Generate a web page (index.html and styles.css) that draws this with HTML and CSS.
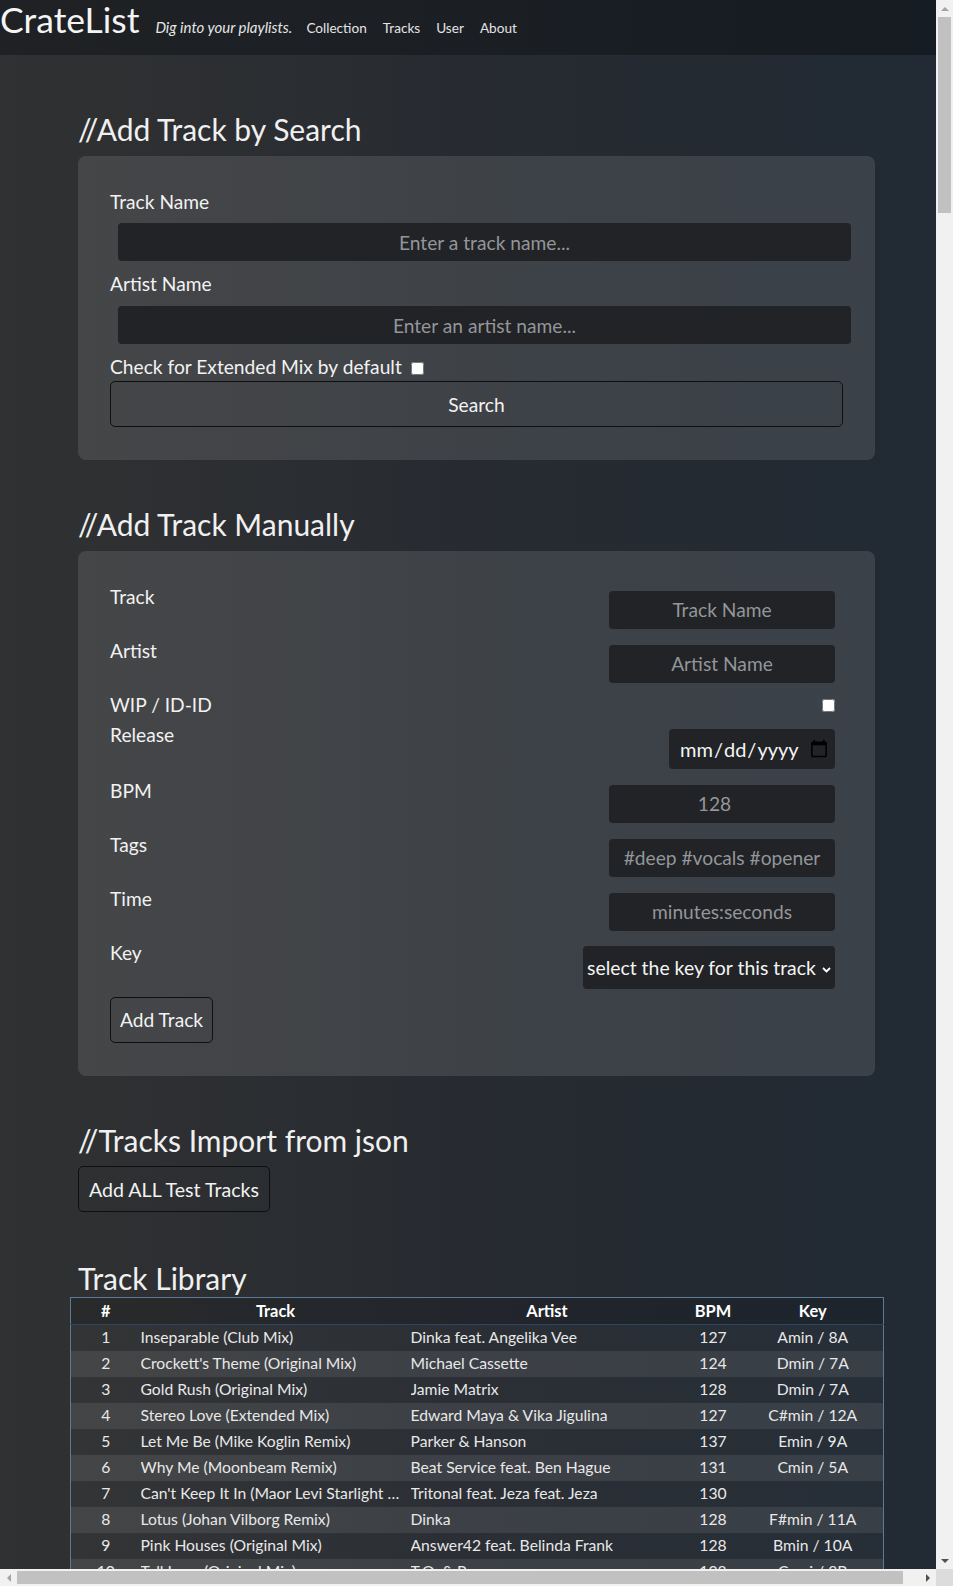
FILE: index.html
```html
<!DOCTYPE html>
<html lang="en">
<head>
<meta charset="utf-8">
<title>CrateList</title>
<link rel="stylesheet" href="styles.css">
</head>
<body>
<header class="topbar">
  <a class="brand" href="#">CrateList</a>
  <span class="tagline">Dig into your playlists.</span>
  <nav class="nav">
    <a href="#">Collection</a>
    <a href="#">Tracks</a>
    <a href="#">User</a>
    <a href="#">About</a>
  </nav>
</header>

<main class="page">
  <section class="section">
    <h2 class="heading">//Add Track by Search</h2>
    <form class="card search-card">
      <label class="field-label">Track Name</label>
      <input class="wide-input" type="text" placeholder="Enter a track name...">
      <label class="field-label">Artist Name</label>
      <input class="wide-input" type="text" placeholder="Enter an artist name...">
      <label class="field-label check-line">Check for Extended Mix by default <input type="checkbox" class="check"></label>
      <button type="button" class="btn btn-block">Search</button>
    </form>
  </section>

  <section class="section">
    <h2 class="heading">//Add Track Manually</h2>
    <form class="card manual-card">
      <div class="row">
        <label class="field-label">Track</label>
        <input class="small-input" type="text" placeholder="Track Name">
      </div>
      <div class="row">
        <label class="field-label">Artist</label>
        <input class="small-input" type="text" placeholder="Artist Name">
      </div>
      <div class="row">
        <label class="field-label">WIP / ID-ID</label>
        <input class="row-check" type="checkbox">
      </div>
      <div class="row">
        <label class="field-label">Release</label>
        <input class="date-input" type="date">
      </div>
      <div class="row">
        <label class="field-label">BPM</label>
        <input class="small-input" type="number" placeholder="128">
      </div>
      <div class="row">
        <label class="field-label">Tags</label>
        <input class="small-input" type="text" placeholder="#deep #vocals #opener">
      </div>
      <div class="row">
        <label class="field-label">Time</label>
        <input class="small-input" type="text" placeholder="minutes:seconds">
      </div>
      <div class="row">
        <label class="field-label">Key</label>
        <div class="select-wrap">
          <select class="key-select">
            <option>select the key for this track</option>
          </select>
          <svg class="chevron" width="9" height="6" viewBox="0 0 9 6"><polyline points="1,1 4.5,4.5 8,1" fill="none" stroke="#fff" stroke-width="1.8"/></svg>
        </div>
      </div>
      <button type="button" class="btn btn-add">Add Track</button>
    </form>
  </section>

  <section class="section">
    <h2 class="heading import-heading">//Tracks Import from json</h2>
    <button type="button" class="btn btn-add btn-import">Add ALL Test Tracks</button>
  </section>

  <section class="section library">
    <h2 class="heading library-heading">Track Library</h2>
    <table class="tracks">
      <colgroup>
        <col class="c-num"><col class="c-track"><col class="c-artist"><col class="c-bpm"><col class="c-key">
      </colgroup>
      <thead>
        <tr><th>#</th><th>Track</th><th>Artist</th><th>BPM</th><th>Key</th></tr>
      </thead>
      <tbody>
        <tr><td class="num">1</td><td class="name">Inseparable (Club Mix)</td><td class="name">Dinka feat. Angelika Vee</td><td class="num">127</td><td class="num">Amin / 8A</td></tr>
        <tr><td class="num">2</td><td class="name">Crockett's Theme (Original Mix)</td><td class="name">Michael Cassette</td><td class="num">124</td><td class="num">Dmin / 7A</td></tr>
        <tr><td class="num">3</td><td class="name">Gold Rush (Original Mix)</td><td class="name">Jamie Matrix</td><td class="num">128</td><td class="num">Dmin / 7A</td></tr>
        <tr><td class="num">4</td><td class="name">Stereo Love (Extended Mix)</td><td class="name">Edward Maya &amp; Vika Jigulina</td><td class="num">127</td><td class="num">C#min / 12A</td></tr>
        <tr><td class="num">5</td><td class="name">Let Me Be (Mike Koglin Remix)</td><td class="name">Parker &amp; Hanson</td><td class="num">137</td><td class="num">Emin / 9A</td></tr>
        <tr><td class="num">6</td><td class="name">Why Me (Moonbeam Remix)</td><td class="name">Beat Service feat. Ben Hague</td><td class="num">131</td><td class="num">Cmin / 5A</td></tr>
        <tr><td class="num">7</td><td class="name">Can't Keep It In (Maor Levi Starlight Remix)</td><td class="name">Tritonal feat. Jeza feat. Jeza</td><td class="num">130</td><td class="num"></td></tr>
        <tr><td class="num">8</td><td class="name">Lotus (Johan Vilborg Remix)</td><td class="name">Dinka</td><td class="num">128</td><td class="num">F#min / 11A</td></tr>
        <tr><td class="num">9</td><td class="name">Pink Houses (Original Mix)</td><td class="name">Answer42 feat. Belinda Frank</td><td class="num">128</td><td class="num">Bmin / 10A</td></tr>
        <tr><td class="num">10</td><td class="name">Tell Love (Original Mix)</td><td class="name">T.O. &amp; P.</td><td class="num">128</td><td class="num">Cmaj / 8B</td></tr>
      </tbody>
    </table>
  </section>
</main>

<div class="scrollbar scrollbar-v" aria-hidden="true">
  <span class="sb-btn"><span class="tri tri-up"></span></span>
  <span class="sb-track"><span class="sb-thumb"></span></span>
  <span class="sb-btn"><span class="tri tri-down"></span></span>
</div>
<div class="scrollbar scrollbar-h" aria-hidden="true">
  <span class="sb-btn"><span class="tri tri-left"></span></span>
  <span class="sb-track"><span class="sb-thumb"></span></span>
  <span class="sb-btn"><span class="tri tri-right"></span></span>
</div>
<div class="scroll-corner" aria-hidden="true"></div>
</body>
</html>
```

FILE: styles.css
```css
html, body {
  margin: 0;
  padding: 0;
}

body {
  font-family: Lato, "Open Sans", sans-serif;
  color: #eeeeee;
  background: linear-gradient(90deg, #303132 0%, #272b31 50%, #212a34 100%);
  line-height: 1.5;
}

/* ---------- top bar ---------- */
.topbar {
  width: 100vw;
  height: 55px;
  box-sizing: border-box;
  display: flex;
  align-items: baseline;
  gap: 16px;
  background: linear-gradient(90deg, #1f2124 0%, #1b1f24 50%, #151b22 100%);
}

.brand {
  font-size: 35.5px;
  line-height: 40px;
  color: #f4f4f4;
  text-decoration: none;
  font-weight: 400;
}

.tagline {
  font-size: 15px;
  font-style: italic;
  color: #e6e6e6;
}

.nav {
  display: flex;
  gap: 16px;
  margin-left: -2px;
}

.nav a {
  font-size: 13.6px;
  color: #e4e4e4;
  text-decoration: none;
}

/* ---------- page ---------- */
.page {
  width: 100vw;
  box-sizing: border-box;
  padding: 58px 78px 40px;
}

.section + .section {
  margin-top: 48px;
}

.heading {
  margin: 0 0 9px;
  font-size: 30px;
  font-weight: 400;
  line-height: 33.6px;
  color: #f0f0f0;
}

.import-heading {
  margin-bottom: 9px;
}

.section.library {
  margin-top: 50px;
}

.library-heading {
  margin: 0 0 1px 8px;
}

.card {
  background: rgba(255, 255, 255, 0.11);
  border-radius: 8px;
  padding: 32px 32px 33px;
}

.field-label {
  display: block;
  font-size: 19.2px;
  line-height: 28.8px;
  color: #f2f2f2;
}

input, select, button {
  font-family: inherit;
}

.wide-input {
  display: block;
  box-sizing: border-box;
  width: 100%;
  height: 38px;
  margin: 7px 0 9px 8px;
  border: none;
  border-radius: 4px;
  background: #212326;
  color: #f0f0f0;
  font-size: 19.2px;
  text-align: center;
}

::placeholder {
  color: #93969a;
  opacity: 1;
}

.check-line {
  line-height: 27px;
}

.check {
  width: 13px;
  height: 13px;
  margin: 0 0 0 4px;
  vertical-align: -1px;
}

.btn {
  box-sizing: border-box;
  background: transparent;
  border: 1px solid #0e0f10;
  border-radius: 5px;
  color: #f2f2f2;
  font-size: 19.2px;
  height: 46px;
  cursor: pointer;
}

.btn-block {
  display: block;
  width: 100%;
  margin-top: 1px;
}

.btn-add {
  display: block;
  padding: 0 9px;
}

.btn-import {
  padding: 0 10px;
  font-size: 19.6px;
}

/* ---------- manual form ---------- */
.row {
  display: flex;
  justify-content: space-between;
  align-items: flex-start;
}

.small-input {
  box-sizing: border-box;
  width: 226px;
  height: 38px;
  margin: 8px 8px 8px 0;
  border: none;
  border-radius: 4px;
  background: #212326;
  color: #f0f0f0;
  font-size: 19.2px;
  text-align: center;
  padding: 0 8px;
}

.row-check {
  width: 13px;
  height: 13px;
  margin: 8px 8px 9px 0;
}

.date-input {
  box-sizing: border-box;
  width: 166px;
  height: 40px;
  margin: 8px 8px 8px 0;
  border: none;
  border-radius: 4px;
  background: #212326;
  color: #f4f4f4;
  font-size: 20px;
  padding: 0 4px 0 10px;
}

.select-wrap {
  position: relative;
  margin: 7px 8px 8px 0;
}

.key-select {
  display: block;
  box-sizing: border-box;
  width: 252px;
  height: 43px;
  border: none;
  border-radius: 4px;
  background: #212326;
  color: #f4f4f4;
  font-size: 19.4px;
  padding: 0 4px;
  appearance: none;
  -webkit-appearance: none;
}

.chevron {
  position: absolute;
  right: 4px;
  top: 21px;
  pointer-events: none;
}

/* ---------- table ---------- */
.library {
  margin-left: -8px;
  margin-right: -8px;
}

.tracks {
  width: 100%;
  table-layout: fixed;
  border-collapse: collapse;
  border: 1px solid #5d7995;
  font-size: 15.7px;
}

.c-num { width: 70px; }
.c-track { width: 270px; }
.c-artist { width: 273px; }
.c-bpm { width: 59px; }
.c-key { width: 141px; }

.tracks th {
  height: 26px;
  padding: 0 2px;
  font-size: 16.4px;
  font-weight: 700;
  color: #ffffff;
  text-align: center;
  background: rgba(0, 0, 0, 0.12);
  border-bottom: 1px solid #2c4766;
}

.tracks td {
  height: 26px;
  padding: 0 2px;
  color: #e8e8e8;
  white-space: nowrap;
  overflow: hidden;
  text-overflow: ellipsis;
}

.tracks tbody tr:nth-child(odd) {
  background: rgba(255, 255, 255, 0.02);
}

.tracks tbody tr:nth-child(even) {
  background: rgba(255, 255, 255, 0.1);
}

.tracks td.num {
  text-align: center;
}

.tracks td.name {
  text-align: left;
  padding-left: 0;
}

/* ---------- window scrollbars (drawn over the page) ---------- */
.scrollbar {
  position: fixed;
  display: flex;
  background: #f1f1f1;
  z-index: 10;
}

.scrollbar-v {
  top: 0;
  right: 0;
  width: 17px;
  height: calc(100vh - 17px);
  flex-direction: column;
}

.scrollbar-h {
  left: 0;
  bottom: 0;
  height: 17px;
  width: calc(100vw - 17px);
  flex-direction: row;
}

.scroll-corner {
  position: fixed;
  right: 0;
  bottom: 0;
  width: 17px;
  height: 17px;
  background: #dcdcdc;
  z-index: 10;
}

.sb-btn {
  flex: 0 0 17px;
  width: 17px;
  height: 17px;
  display: flex;
  align-items: center;
  justify-content: center;
}

.sb-track {
  flex: 1 1 auto;
  display: flex;
}

.scrollbar-v .sb-track {
  flex-direction: column;
}

.scrollbar-v .sb-thumb {
  margin: 0 2px;
  height: 196px;
  background: #c1c1c1;
}

.scrollbar-h .sb-thumb {
  margin: 2px 0;
  width: 886px;
  background: #c1c1c1;
}

.tri {
  width: 0;
  height: 0;
  border-style: solid;
  border-color: transparent;
}

.tri-up {
  border-width: 0 4px 4px 4px;
  border-bottom-color: #a3a3a3;
}

.tri-down {
  border-width: 4px 4px 0 4px;
  border-top-color: #505050;
}

.tri-left {
  border-width: 4px 4px 4px 0;
  border-right-color: #a3a3a3;
}

.tri-right {
  border-width: 4px 0 4px 4px;
  border-left-color: #505050;
}
```
